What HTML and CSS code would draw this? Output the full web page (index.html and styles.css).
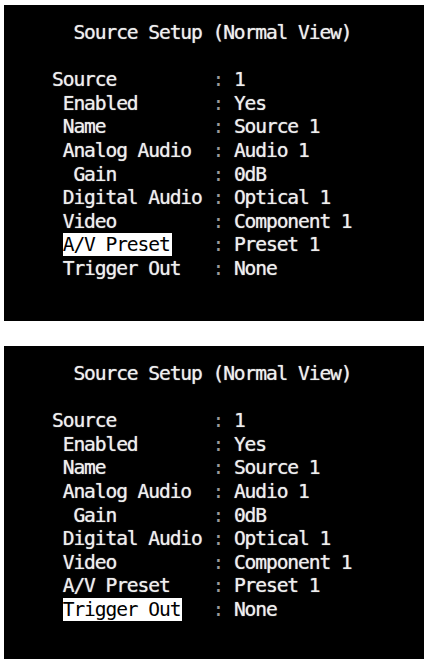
FILE: index.html
```html
<!DOCTYPE html>
<html lang="en">
<head>
    <meta charset="UTF-8">
    <meta name="viewport" content="width=device-width, initial-scale=1.0">
    <title>Source Setup</title>
    <link rel="stylesheet" href="styles.css">
</head>
<body>
    <div class="screen">
        <div class="title">Source Setup (Normal View)</div>
        <div class="menu">
            <div class="row"><span class="label">Source</span><span class="colon">:</span><span class="value">1</span></div>
            <div class="row"><span class="label indent-1">Enabled</span><span class="colon">:</span><span class="value">Yes</span></div>
            <div class="row"><span class="label indent-1">Name</span><span class="colon">:</span><span class="value">Source 1</span></div>
            <div class="row"><span class="label indent-1">Analog Audio</span><span class="colon">:</span><span class="value">Audio 1</span></div>
            <div class="row"><span class="label indent-2">Gain</span><span class="colon">:</span><span class="value">0dB</span></div>
            <div class="row"><span class="label indent-1">Digital Audio</span><span class="colon">:</span><span class="value">Optical 1</span></div>
            <div class="row"><span class="label indent-1">Video</span><span class="colon">:</span><span class="value">Component 1</span></div>
            <div class="row"><span class="label indent-1"><span class="selected">A/V Preset</span></span><span class="colon">:</span><span class="value">Preset 1</span></div>
            <div class="row"><span class="label indent-1">Trigger Out</span><span class="colon">:</span><span class="value">None</span></div>
        </div>
    </div>

    <div class="screen">
        <div class="title">Source Setup (Normal View)</div>
        <div class="menu">
            <div class="row"><span class="label">Source</span><span class="colon">:</span><span class="value">1</span></div>
            <div class="row"><span class="label indent-1">Enabled</span><span class="colon">:</span><span class="value">Yes</span></div>
            <div class="row"><span class="label indent-1">Name</span><span class="colon">:</span><span class="value">Source 1</span></div>
            <div class="row"><span class="label indent-1">Analog Audio</span><span class="colon">:</span><span class="value">Audio 1</span></div>
            <div class="row"><span class="label indent-2">Gain</span><span class="colon">:</span><span class="value">0dB</span></div>
            <div class="row"><span class="label indent-1">Digital Audio</span><span class="colon">:</span><span class="value">Optical 1</span></div>
            <div class="row"><span class="label indent-1">Video</span><span class="colon">:</span><span class="value">Component 1</span></div>
            <div class="row"><span class="label indent-1">A/V Preset</span><span class="colon">:</span><span class="value">Preset 1</span></div>
            <div class="row"><span class="label indent-1"><span class="selected">Trigger Out</span></span><span class="colon">:</span><span class="value">None</span></div>
        </div>
    </div>
</body>
</html>
```

FILE: styles.css
```css
/* one character cell of the on-screen display */
:root {
    --cell: 10.7px;
}

body {
    margin: 0;
    padding: 5px 2px 0 4px;
    background-color: #fff;
    font-family: "DejaVu Sans Mono", "Liberation Mono", monospace;
    font-size: 19.6px;
    letter-spacing: -1.1px;
    line-height: 23.6px;
    color: #efefef;
}

.screen {
    width: 420px;
    height: 316px;
    box-sizing: border-box;
    padding: 16px 0 0 48px;
    background-color: #000;
    overflow: hidden;
}

.screen + .screen {
    margin-top: 25px;
}

.title {
    padding-left: calc(var(--cell) * 2);
    margin-bottom: 23.6px;
}

.title,
.row {
    white-space: pre;
    text-shadow: 0 0 1px rgba(255, 255, 255, 0.7);
}

.row {
    display: flex;
}

.label {
    width: calc(var(--cell) * 15);
    flex-shrink: 0;
}

.indent-1 {
    padding-left: var(--cell);
    width: calc(var(--cell) * 14);
}

.indent-2 {
    padding-left: calc(var(--cell) * 2);
    width: calc(var(--cell) * 13);
}

.colon {
    width: calc(var(--cell) * 2);
    color: #9a9a9a;
    text-shadow: none;
}

.selected {
    display: inline-block;
    height: 23px;
    line-height: 23px;
    background-color: #fff;
    color: #000;
    text-shadow: none;
    padding-right: 2px;
}
```
